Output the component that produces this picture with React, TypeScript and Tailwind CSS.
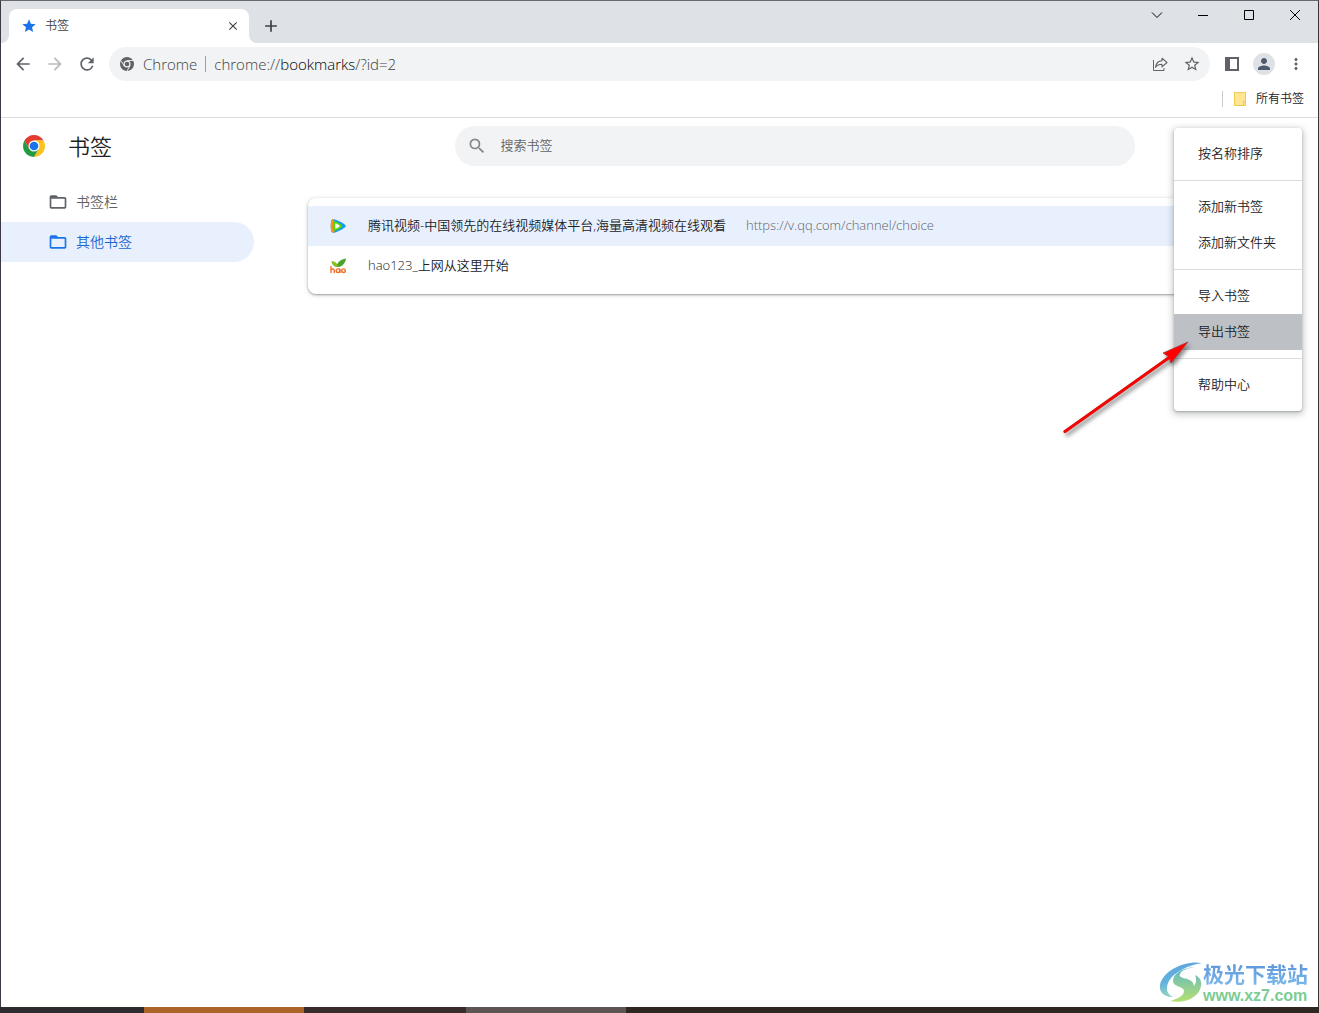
import type { ReactNode } from 'react';
import clsx from 'clsx';
import {
  MdAdd,
  MdArrowBack,
  MdArrowForward,
  MdClose,
  MdFolderOpen,
  MdMoreVert,
  MdPerson,
  MdRefresh,
  MdSearch,
  MdStar,
  MdStarBorder,
} from 'react-icons/md';

const folders = [
  { id: 1, name: '书签栏' },
  { id: 2, name: '其他书签' },
];

const bookmarks = [
  {
    title: '腾讯视频-中国领先的在线视频媒体平台,海量高清视频在线观看',
    url: 'https://v.qq.com/channel/choice',
    icon: <TencentIcon />,
    selected: true,
  },
  { title: 'hao123_上网从这里开始', url: '', icon: <HaoIcon />, selected: false },
];

const menuGroups = [
  ['按名称排序'],
  ['添加新书签', '添加新文件夹'],
  ['导入书签', '导出书签'],
  ['帮助中心'],
];

function TencentIcon() {
  return (
    <svg width="16" height="16" viewBox="0 0 16 16" aria-hidden="true">
      <path d="M2.2 1.4C4.6.5 12.2 4.4 15 6.8c.9.8.9 1.6 0 2.4-2.8 2.4-10.400 6.300-12.800 5.400C.2 13.500.2 2.500 2.200 1.400z" fill="#0c9bf5" />
      <path d="M2.200 1.400C.2 2.500.2 13.500 2.200 14.600c.8.3 1.500.1 2.300-.3L3.800 1.400C3.200 1.200 2.600 1.200 2.200 1.400z" fill="#ff9012" />
      <path d="M3.800 3.200c2-.3 6.500 2.200 8.200 4.100.4.500.4.900 0 1.400-1.700 1.900-6.200 4.400-8.200 4.100-1.200-.8-1.200-8.800 0-9.600z" fill="#5bd60a" />
      <path d="M5.500 5.200c1.300.4 3.200 1.500 4.300 2.800-1.100 1.300-3 2.400-4.300 2.800-.4-1.400-.4-4.200 0-5.600z" fill="#fff" />
    </svg>
  );
}

function HaoIcon() {
  return (
    <svg width="16" height="16" viewBox="0 0 16 16" aria-hidden="true">
      <path d="M1.500 3.500c2.700-.3 4.500.9 5.500 3C8.500 3.200 11.600.9 16 .5c-.5 4.500-3.500 8.300-8.200 8.600C4.500 8.900 2.200 7 1.500 3.500z" fill="#4ba32c" />
      <path d="M1.500 3.500c2.700-.3 4.500.9 5.500 3l.8 2.600C4.500 8.900 2.200 7 1.500 3.500z" fill="#8cc21f" />
      <g fill="none" stroke="#f0712c" strokeWidth="1.400" strokeLinecap="round">
        <path d="M1 8.500v6M1 12c.7-1.500 3.300-1.500 3.300.5v2" />
        <ellipse cx="8" cy="12.700" rx="1.800" ry="1.800" />
        <path d="M9.900 11v3.600" />
        <ellipse cx="13.500" cy="12.700" rx="1.800" ry="1.800" />
      </g>
    </svg>
  );
}

function ChromeLogo({ size, mono = false }: { size: number; mono?: boolean }) {
  return (
    <svg width={size} height={size} viewBox="0 0 48 48" className="shrink-0" aria-hidden="true">
      <path d="M24 12h20.780A24 24 0 0 0 3.220 12l10.390 18z" fill={mono ? '#5f6368' : '#e33b2e'} />
      <path d="M34.390 30 24 48A24 24 0 0 0 44.780 12H24z" fill={mono ? '#5f6368' : '#fcc31e'} />
      <path d="M13.610 30 3.220 12A24 24 0 0 0 24 48l10.390-18z" fill={mono ? '#5f6368' : '#249a41'} />
      {mono && (
        <path
          d="M24 12h21M34.390 30 24 48M13.610 30 3.220 12"
          stroke="#f1f3f4"
          strokeWidth="3"
        />
      )}
      <circle cx="24" cy="24" r="12" fill={mono ? '#f1f3f4' : '#fff'} />
      <circle cx="24" cy="24" r={mono ? 8 : 9.500} fill={mono ? '#5f6368' : '#1a73e8'} />
    </svg>
  );
}

function ToolButton({ label, className, children }: { label: string; className?: string; children: ReactNode }) {
  return (
    <button
      type="button"
      aria-label={label}
      className={clsx('flex h-8 w-8 shrink-0 items-center justify-center', className ?? 'text-[#5f6368]')}
    >
      {children}
    </button>
  );
}

function TabStrip() {
  return (
    <div className="flex h-[42px] shrink-0 justify-between bg-[#dee1e6]">
      <div className="flex pt-2 pl-2">
        <div className="relative flex w-60 items-center rounded-t-lg bg-white pr-2 pl-3 text-[#3c4043]">
          <svg width="8" height="8" className="absolute bottom-0 -left-2" aria-hidden="true">
            <path d="M8 0v8H0a8 8 0 0 0 8-8z" fill="#fff" />
          </svg>
          <svg width="8" height="8" className="absolute -right-2 bottom-0" aria-hidden="true">
            <path d="M0 0v8h8a8 8 0 0 1-8-8z" fill="#fff" />
          </svg>
          <MdStar size={16} className="text-[#1a73e8]" />
          <span className="ml-2 flex-1 text-xs">书签</span>
          <button type="button" aria-label="关闭标签页" className="flex h-4 w-4 items-center justify-center">
            <MdClose size={14} />
          </button>
        </div>
        <button type="button" aria-label="新标签页" className="ml-2 flex h-[34px] w-7 items-center justify-center text-[#3c4043]">
          <MdAdd size={20} />
        </button>
      </div>
      <div className="flex h-7 text-black">
        <button type="button" aria-label="搜索标签页" className="flex w-[46px] items-center justify-center">
          <svg width="12" height="12" fill="none" stroke="currentColor" aria-hidden="true">
            <path d="M1 3.500l5 5 5-5" />
          </svg>
        </button>
        <button type="button" aria-label="最小化" className="flex w-[46px] items-center justify-center">
          <svg width="10" height="10" aria-hidden="true">
            <path d="M0 5h10v1H0z" />
          </svg>
        </button>
        <button type="button" aria-label="最大化" className="flex w-[46px] items-center justify-center">
          <svg width="10" height="10" fill="none" stroke="currentColor" aria-hidden="true">
            <path d="M.5.500h9v9h-9z" />
          </svg>
        </button>
        <button type="button" aria-label="关闭" className="flex w-[46px] items-center justify-center">
          <svg width="10" height="10" fill="none" stroke="currentColor" aria-hidden="true">
            <path d="M0 0l10 10M10 0 0 10" />
          </svg>
        </button>
      </div>
    </div>
  );
}

function Toolbar() {
  return (
    <div className="flex h-[42px] shrink-0 items-center bg-white px-1.5">
      <ToolButton label="后退">
        <MdArrowBack size={20} />
      </ToolButton>
      <ToolButton label="前进" className="text-[#bababa]">
        <MdArrowForward size={20} />
      </ToolButton>
      <ToolButton label="重新加载">
        <MdRefresh size={20} />
      </ToolButton>
      <div className="ml-1.5 flex h-[34px] flex-1 items-center rounded-full bg-[#f1f3f4] pr-0.5 pl-[11px] text-[15px] text-[#3c4043]">
        <ChromeLogo size={14} mono />
        <span className="ml-[9px] border-r border-[#9aa0a6] pr-2 leading-4">Chrome</span>
        <a href="#bookmarks" className="ml-2 flex-1 leading-5">
          chrome://<span className="text-black">bookmarks</span>/?id=2
        </a>
        <ToolButton label="分享">
          <svg width="16" height="16" viewBox="0 0 16 16" fill="none" stroke="currentColor" aria-hidden="true">
            <path d="M1.500 4v10.500H12V12" strokeWidth="1" />
            <path d="M10 2.200 15 6.500 10 10.800V8.300C7 8.300 5 9.200 3.500 11.300 4 7.700 6 5 10 4.600z" strokeWidth="1.100" strokeLinejoin="round" />
          </svg>
        </ToolButton>
        <ToolButton label="为此标签页添加书签">
          <MdStarBorder size={18} />
        </ToolButton>
      </div>
      <ToolButton label="侧边栏" className="ml-1.5 text-[#5f6368]">
        <svg width="14" height="14" fill="none" stroke="currentColor" aria-hidden="true">
          <path d="M1 1h12v12H1z" strokeWidth="2" />
          <path d="M0 0h5v14H0z" fill="currentColor" stroke="none" />
        </svg>
      </ToolButton>
      <ToolButton label="个人资料">
        <span className="flex h-[22px] w-[22px] items-center justify-center rounded-full bg-[#dee1e6] text-[#4f5a6e]">
          <MdPerson size={18} />
        </span>
      </ToolButton>
      <ToolButton label="更多">
        <MdMoreVert size={18} />
      </ToolButton>
    </div>
  );
}

function BookmarksBar() {
  return (
    <div className="flex h-[33px] shrink-0 items-center justify-end border-b border-[#dadce0] pr-3.5 pb-1">
      <span className="h-4 w-px bg-[#c8cbcf]" />
      <button type="button" className="ml-[11px] flex items-center gap-2.5 text-xs text-[#202124]">
        <svg width="12" height="14" aria-hidden="true">
          <path d="M.5.500h11v13H.5z" fill="#ffe694" stroke="#f0c94d" />
          <path d="M9.500 9.500h2v4h-2z" fill="#ffe694" stroke="#f0c94d" />
        </svg>
        所有书签
      </button>
    </div>
  );
}

function Arrow() {
  return (
    <svg
      width="136"
      height="104"
      viewBox="0 0 136 104"
      className="pointer-events-none absolute top-[209px] -left-[116px] drop-shadow-[2px_3px_2px_rgba(0,0,0,0.5)]"
      aria-hidden="true"
    >
      <path d="M7 94.500 114 18.500" stroke="#b0302c" strokeWidth="3.200" strokeLinecap="round" />
      <path d="M130 5 105 16l6 4 2 6z" fill="#f00" stroke="#a33" strokeWidth=".7" />
      <path d="M7 94.500 114 18.500" stroke="#f00" strokeWidth="2.400" strokeLinecap="round" />
    </svg>
  );
}

function OverflowMenu() {
  return (
    <div className="absolute top-2.5 right-4 w-32 rounded bg-white pb-2 text-[13px] text-[#202124] shadow-[0_1px_2px_rgba(60,64,67,0.3),0_2px_6px_2px_rgba(60,64,67,0.25)]">
      <div role="menu">
        {menuGroups.map((group, i) => (
          <div
            key={group[0]}
            role="group"
            className={clsx('pt-2', i > 0 && 'border-t border-[#dadce0]', i < menuGroups.length - 1 && 'pb-2')}
          >
            {group.map((item) => (
              <button
                key={item}
                type="button"
                role="menuitem"
                className={clsx('block h-9 w-full px-6 text-left', item === '导出书签' && 'bg-[#bdc1c6]')}
              >
                {item}
              </button>
            ))}
          </div>
        ))}
      </div>
      <Arrow />
    </div>
  );
}

function Watermark() {
  return (
    <div className="absolute right-2.5 bottom-px flex items-center">
      <svg width="44" height="42" viewBox="0 0 44 42" aria-hidden="true">
        <defs>
          <linearGradient id="swirl" x1="0" y1="0" x2="0.300" y2="1">
            <stop offset="0" stopColor="#5d9fe0" />
            <stop offset="0.550" stopColor="#62b3dc" />
            <stop offset="1" stopColor="#9ad7c0" />
          </linearGradient>
          <linearGradient id="leaf" x1="0" y1="0" x2="0" y2="1">
            <stop offset="0" stopColor="#60b7c8" />
            <stop offset="1" stopColor="#b4e070" />
          </linearGradient>
        </defs>
        <path d="M43 2C27-1 4 9 1 24c-1 8 5 12 13 12C8 33 6 28 10 20 15 11 29 4 43 2z" fill="url(#swirl)" />
        <path d="M36 6C22 7 14 13 14 20c0 6 11 5 11 10 0 5-7 8-14 10 14 3 29-3 31-15 1-6-2-9-6-11 2 5 1 8-1 11-1-6-6-7-11-8-3-1-4-2-3-4 2-4 8-6 15-7z" fill="url(#leaf)" />
      </svg>
      <div className="flex flex-col pt-1 whitespace-nowrap">
        <span className="bg-linear-to-b from-[#5a93dc] to-[#7db9ea] bg-clip-text text-[21px] leading-6 font-bold text-transparent">
          极光下载站
        </span>
        <span className="font-['Liberation_Sans',sans-serif] text-base leading-5 font-bold text-[#7ccc93]">www.xz7.com</span>
      </div>
    </div>
  );
}

function BookmarksPage() {
  return (
    <main className="relative flex flex-1 flex-col bg-white">
      <header className="flex h-14 shrink-0 items-center">
        <div className="flex w-64 shrink-0 items-center pl-[22px]">
          <ChromeLogo size={22} />
          <h1 className="ml-[23px] text-[22px] text-[#202124]">书签</h1>
        </div>
        <div className="flex flex-1 justify-center pl-3.5">
          <label className="flex h-10 w-full max-w-[680px] items-center rounded-full bg-[#f1f3f4] pl-3">
            <MdSearch size={20} className="text-[#80868b]" />
            <input
              type="search"
              aria-label="搜索书签"
              placeholder="搜索书签"
              className="ml-3.5 flex-1 bg-transparent text-[13px] outline-none placeholder:text-[#5f6368]"
            />
          </label>
        </div>
      </header>
      <div className="flex flex-1">
        <nav className="w-64 shrink-0 pt-2 pr-[3px]">
          {folders.map((folder) => (
            <a
              key={folder.id}
              href={`#${folder.id}`}
              className={clsx(
                'flex h-10 items-center gap-2 rounded-r-full pl-[47px] text-sm',
                folder.id === 2 ? 'bg-[#e8f0fe] text-[#1967d2]' : 'text-[#5f6368]',
              )}
            >
              <MdFolderOpen size={20} className={folder.id === 2 ? 'text-[#1a73e8]' : undefined} />
              {folder.name}
            </a>
          ))}
        </nav>
        <section className="flex-1 pt-6 pr-9 pl-[51px]">
          <ul className="rounded-lg bg-white py-2 text-[13px] shadow-[0_1px_2px_rgba(60,64,67,0.4),0_1px_4px_1px_rgba(60,64,67,0.15)]">
            {bookmarks.map((item) => (
              <li key={item.title} className={clsx('flex h-10 items-center pl-[22px]', item.selected && 'bg-[#e8f0fe]')}>
                {item.icon}
                <span className="ml-[22px] whitespace-nowrap text-[#202124]">{item.title}</span>
                <span className="ml-5 whitespace-nowrap text-[#5f6368]">{item.url}</span>
              </li>
            ))}
          </ul>
        </section>
      </div>
      <OverflowMenu />
      <Watermark />
    </main>
  );
}

export default function App() {
  return (
    <div className="flex h-screen flex-col overflow-hidden bg-[#2f2621] font-['Open_Sans','Noto_Sans_CJK_SC',sans-serif] font-[350]">
      <div className="flex flex-1 flex-col border-x border-t border-t-[#67696d] border-r-[#3d3436] border-l-[#3b3a44] bg-white">
        <TabStrip />
        <Toolbar />
        <BookmarksBar />
        <BookmarksPage />
      </div>
      <div className="flex h-1.5 shrink-0">
        <span className="w-36 bg-[#2f2a30]" />
        <span className="w-40 bg-[#ad6428]" />
        <span className="w-[162px] bg-[#382c2b]" />
        <span className="w-40 bg-[#5d5553]" />
      </div>
    </div>
  );
}
